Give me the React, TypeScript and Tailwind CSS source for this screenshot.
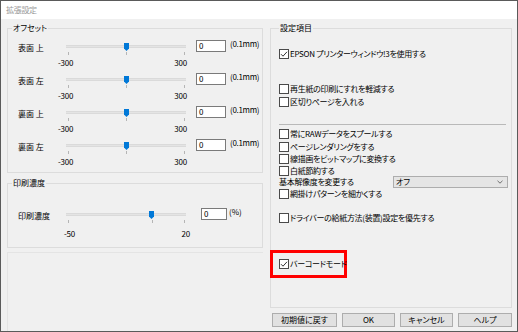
import React from 'react';

// 拡張設定 dialog (EPSON driver)

const font = "font-['Noto_Sans_CJK_JP','Noto_Sans',sans-serif] [font-feature-settings:'palt']";

interface SliderProps {
  thumb: number;
  ticks: number[];
  min: string;
  max: string;
  tall?: boolean;
  dense?: boolean;
}

const Slider: React.FC<SliderProps> = ({ thumb, ticks, min, max, tall, dense }) => {
  return (
    <div className="w-[120px] shrink-0 flex flex-col">
      <div className={`relative pt-[8px] ${tall ? 'h-[23px]' : 'h-[20px]'}`}>
        <div className="h-[3px] bg-[#e4e4e4] border-y border-[#dadada]"></div>
        <svg
          className="absolute top-[6px]"
          style={{ left: thumb - 2 }}
          width="5"
          height="8"
          viewBox="0 0 5 8"
        >
          <polygon points="0,0 5,0 5,5.5 2.5,8 0,5.5" fill="#0078d7" />
        </svg>
        {ticks.map((t) => (
          <div key={t} className="absolute top-[15px] w-px h-[3px] bg-[#b5b5b5]" style={{ left: t }}></div>
        ))}
      </div>
      <div
        className={`flex justify-between text-[8px] tracking-[-0.2px] leading-[12px] ${
          dense ? 'ml-[-2px] w-[126px]' : 'ml-[-8px] w-[129px]'
        }`}
      >
        <span>{min}</span>
        <span>{max}</span>
      </div>
    </div>
  );
};

const OffsetRow: React.FC<{ label: string }> = ({ label }) => (
  <div className="flex h-[33px]">
    <div className="w-[58px] shrink-0 pl-[10px] mt-[5px] leading-[12px] text-[8px]">{label}</div>
    <Slider thumb={60} ticks={[2, 60, 118]} min="-300" max="300" />
    <div className="ml-[10px] mt-[3px] w-[30px] h-[12px] border border-[#7a7a7a] bg-white text-[8px] leading-[10px] pl-[2px]">
      0
    </div>
    <div className="ml-[4px] mt-[1px] text-[8px] tracking-[-0.3px] leading-[12px]">(0.1mm)</div>
  </div>
);

const CheckBox: React.FC<{ checked?: boolean }> = ({ checked }) => (
  <div className="w-[10px] h-[10px] shrink-0 border border-[#4a4a4a] bg-white flex items-center justify-center">
    {checked && (
      <svg width="8" height="8" viewBox="0 0 8 8">
        <path d="M1 4.2 L3 6.2 L7 1.8" fill="none" stroke="#333333" strokeWidth="1" />
      </svg>
    )}
  </div>
);

const CheckRow: React.FC<{ label: string; checked?: boolean; h?: string; mt?: string }> = ({
  label,
  checked,
  h = 'h-[13px]',
  mt = '',
}) => (
  <div className={`flex items-center gap-[1px] ${h} ${mt}`}>
    <CheckBox checked={checked} />
    <span className="text-[8px] tracking-[-0.3px] leading-[12px] whitespace-nowrap">{label}</span>
  </div>
);

const Button: React.FC<{ label: string; w: string }> = ({ label, w }) => (
  <button
    className={`${w} h-[14px] border border-[#adadad] bg-[#e1e1e1] text-[8px] leading-[12px] text-black flex items-center justify-center`}
  >
    {label}
  </button>
);

export default function App() {
  return (
    <div className={`w-[518px] h-[332px] border border-[#5a5a5a] flex flex-col text-black ${font}`}>
      {/* title bar */}
      <div className="h-[18px] bg-white flex items-center pl-[5px]">
        <span className="text-[8px] tracking-[-0.3px] text-[#9a9a9a] leading-[10px]">拡張設定</span>
      </div>

      <div className="flex-1 bg-[#f0f0f0] flex pl-[6px] gap-[7px]">
        {/* left column */}
        <div className="w-[256px] flex flex-col">
          <fieldset className="mt-[3px] border border-[#dcdcdc] pt-[3px] pb-[3px]">
            <legend className="ml-[4px] px-[1px] text-[8px] leading-[12px]">オフセット</legend>
            <OffsetRow label="表面 上" />
            <OffsetRow label="表面 左" />
            <OffsetRow label="裏面 上" />
            <OffsetRow label="裏面 左" />
          </fieldset>

          <fieldset className="mt-[4px] border border-[#dcdcdc] pt-[16px] pb-[7px]">
            <legend className="ml-[4px] px-[1px] text-[8px] leading-[12px]">印刷濃度</legend>
            <div className="flex h-[35px]">
              <div className="w-[58px] shrink-0 pl-[10px] mt-[5px] leading-[12px] text-[8px]">印刷濃度</div>
              <Slider thumb={85} ticks={[2, 86, 118]} min="-50" max="20" tall dense />
              <div className="ml-[15px] mt-[3px] w-[26px] h-[12px] border border-[#7a7a7a] bg-white text-[8px] leading-[10px] pl-[2px]">
                0
              </div>
              <div className="ml-[2px] mt-[1px] text-[8px] leading-[12px]">(%)</div>
            </div>
          </fieldset>

          <div className="mt-[4px] flex-1 border-l border-t border-[#e4e4e4]"></div>
        </div>

        {/* right column */}
        <div className="w-[242px] flex flex-col">
          <fieldset className="mt-[3px] border border-[#dcdcdc] pl-[8px] pr-[3px] pt-[13px] pb-[29px]">
            <legend className="px-[1px] text-[8px] leading-[12px]">設定項目</legend>
            <CheckRow label="EPSON プリンターウィンドウ!3を使用する" checked />
            <CheckRow label="再生紙の印刷にすれを軽減する" mt="mt-[22px]" />
            <CheckRow label="区切りページを入れる" />
            <div className="mt-[16px] mb-[2px] mr-[2px] h-px bg-[#b9b9b9]"></div>
            <CheckRow label="常にRAWデータをスプールする" />
            <CheckRow label="ページレンダリングをする" />
            <CheckRow label="線描画をビットマップに変換する" h="h-[12px]" />
            <CheckRow label="白紙節約する" h="h-[11px]" />
            <div className="flex items-center h-[12px]">
              <span className="text-[8px] tracking-[-0.3px] leading-[12px]">基本解像度を変更する</span>
              <div className="ml-auto w-[115px] h-[12px] border border-[#adadad] bg-[#e5e5e5] flex items-center pl-[2px] pr-[4px]">
                <span className="text-[8px] leading-[10px]">オフ</span>
                <svg className="ml-auto" width="6" height="4" viewBox="0 0 6 4">
                  <path d="M0.5 0.8 L3 3.2 L5.5 0.8" fill="none" stroke="#606060" strokeWidth="0.9" />
                </svg>
              </div>
            </div>
            <CheckRow label="網掛けパターンを細かくする" h="h-[11px]" />
            <CheckRow label="ドライバーの給紙方法(装置)設定を優先する" mt="mt-[12px]" />
            <div className="mt-[26px] ml-[-9px] w-[77px] h-[28px] border-[3px] border-[#ff0000] flex items-center pl-[6px] gap-[1px]">
              <CheckBox checked />
              <span className="text-[8px] tracking-[-0.3px] leading-[12px] whitespace-nowrap">バーコードモード</span>
            </div>
          </fieldset>

          <div className="mt-[5px] ml-[2px] flex gap-[5px]">
            <Button label="初期値に戻す" w="w-[65px]" />
            <Button label="OK" w="w-[53px]" />
            <Button label="キャンセル" w="w-[53px]" />
            <Button label="ヘルプ" w="w-[54px]" />
          </div>
        </div>
      </div>
    </div>
  );
}
